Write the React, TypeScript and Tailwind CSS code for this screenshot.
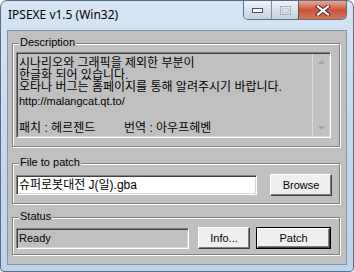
const ui = "font-['Liberation_Sans',Arial,sans-serif] text-[11px]";
const ko = "font-['Liberation_Sans','Noto_Sans_CJK_KR',sans-serif] text-[12px]";

const Group = ({ label, h, mt, children }: { label: string; h: string; mt: string; children: React.ReactNode }) => (
  <div className={`relative ml-[4px] w-[328px] ${h} ${mt} border border-[#808080] shadow-[inset_1px_1px_0_#fff,1px_1px_0_#fff]`}>
    <span className={`absolute left-[6px] top-[-8px] bg-[#c0c0c0] px-[1px] leading-[13px] text-black ${ui}`}>{label}</span>
    {children}
  </div>
);

const Sunken = ({ className, children }: { className: string; children?: React.ReactNode }) => (
  <div
    className={`border border-t-[#808080] border-l-[#808080] border-r-white border-b-white shadow-[inset_1px_1px_0_#404040,inset_-1px_-1px_0_#d8d8d8] ${className}`}
  >
    {children}
  </div>
);

const Btn = ({ label, w, def }: { label: string; w: string; def?: boolean }) => (
  <div className={`${w} h-[22px] ${def ? "border border-black" : ""}`}>
    <div
      className={`h-full flex items-center justify-center bg-[#efefef] border border-t-white border-l-white border-r-[#404040] border-b-[#404040] shadow-[inset_-1px_-1px_0_#808080] text-black ${ui}`}
    >
      {label}
    </div>
  </div>
);

export default function App() {
  return (
    <div className="w-[354px] h-[272px] bg-white">
      <div className="w-[354px] h-[272px] rounded-t-[7px] rounded-b-[4px] border border-[#5b6d84] bg-gradient-to-b from-[#d6e5f5] via-[#c4d8ee] to-[#bcd3ec] flex flex-col">
        {/* title bar */}
        <div className="h-[29px] flex items-start">
          <span className="ml-[7px] mt-[6px] leading-[16px] text-[12px] text-black font-['Noto_Sans',sans-serif]">IPSEXE v1.5 (Win32)</span>
          <div className="ml-auto mr-[6px] flex h-[19px] rounded-b-[5px] border border-t-0 border-[#5f7188] overflow-hidden">
            <div className="w-[28px] flex items-center justify-center bg-gradient-to-b from-[#eef3f8] via-[#d8e2ed] to-[#c3d1e1] border-r border-[#7d8ea3]">
              <svg width="11" height="5" viewBox="0 0 11 5">
                <rect x="0.5" y="0.5" width="10" height="4" fill="#fff" stroke="#45566b" />
              </svg>
            </div>
            <div className="w-[27px] flex items-center justify-center bg-gradient-to-b from-[#eef3f8] via-[#d8e2ed] to-[#c3d1e1] border-r border-[#7d4a40]">
              <svg width="11" height="9" viewBox="0 0 11 9">
                <rect x="0.5" y="0.5" width="10" height="8" fill="none" stroke="#a9b4c1" />
                <rect x="2.5" y="2.5" width="6" height="4" fill="none" stroke="#c4ccd6" />
              </svg>
            </div>
            <div className="w-[47px] flex items-center justify-center bg-gradient-to-b from-[#e9a799] via-[#c9533a] to-[#d4755a]">
              <svg width="16" height="11" viewBox="0 0 16 11">
                <path d="M3 1.5 L13 9.5 M13 1.5 L3 9.5" stroke="#4a2a24" strokeWidth="4" strokeLinecap="square" />
                <path d="M3 1.5 L13 9.5 M13 1.5 L3 9.5" stroke="#fff" strokeWidth="2.2" strokeLinecap="square" />
              </svg>
            </div>
          </div>
        </div>

        {/* client */}
        <div className="mx-[6px] h-[235px] border border-[#8394aa] bg-[#c0c0c0] flex flex-col">
          <Group label="Description" h="h-[104px]" mt="mt-[12px]">
            <div className="pl-[3px] pt-[8px]">
              <Sunken className="w-[315px] h-[86px] flex">
                <div className={`flex-1 pl-[2px] pt-[4px] text-black ${ko}`}>
                  <div className="leading-[12px]">시나리오와 그래픽을 제외한 부분이</div>
                  <div className="leading-[12px]">한글화 되어 있습니다.</div>
                  <div className="leading-[12px]">오타나 버그는 홈페이지를 통해 알려주시기 바랍니다.</div>
                  <div className={`leading-[16px] ${ui}`}>http://malangcat.qt.to/</div>
                  <div className="mt-[13px] leading-[12px] flex">
                    <span className="w-[105px]">패치 : 헤르젠드</span>
                    <span>번역 : 아우프헤벤</span>
                  </div>
                </div>
                <div className="w-[17px] mr-[1px] my-[1px] border-l border-[#dcdcdc] flex flex-col justify-between items-center py-[6px]">
                  <svg width="7" height="4" viewBox="0 0 7 4">
                    <path d="M0 4 L3.5 0 L7 4 Z" fill="#a3a3a3" />
                  </svg>
                  <svg width="7" height="4" viewBox="0 0 7 4">
                    <path d="M0 0 L3.5 4 L7 0 Z" fill="#a3a3a3" />
                  </svg>
                </div>
              </Sunken>
            </div>
          </Group>

          <Group label="File to patch" h="h-[41px]" mt="mt-[16px]">
            <div className="pl-[3px] pt-[10px] flex items-center">
              <Sunken className="w-[241px] h-[20px] bg-white flex items-center">
                <span className={`pl-[2px] leading-[14px] text-black ${ko}`}>슈퍼로봇대전 J(일).gba</span>
              </Sunken>
              <div className="ml-[13px]">
                <Btn label="Browse" w="w-[62px]" />
              </div>
            </div>
          </Group>

          <Group label="Status" h="h-[38px]" mt="mt-[13px]">
            <div className="pl-[3px] pt-[9px] flex items-center">
              <Sunken className="w-[173px] h-[21px] flex items-center">
                <span className={`pl-[2px] text-black ${ui}`}>Ready</span>
              </Sunken>
              <div className="ml-[9px]">
                <Btn label="Info..." w="w-[52px]" />
              </div>
              <div className="ml-[6px]">
                <Btn label="Patch" w="w-[75px]" def />
              </div>
            </div>
          </Group>
        </div>
      </div>
    </div>
  );
}
